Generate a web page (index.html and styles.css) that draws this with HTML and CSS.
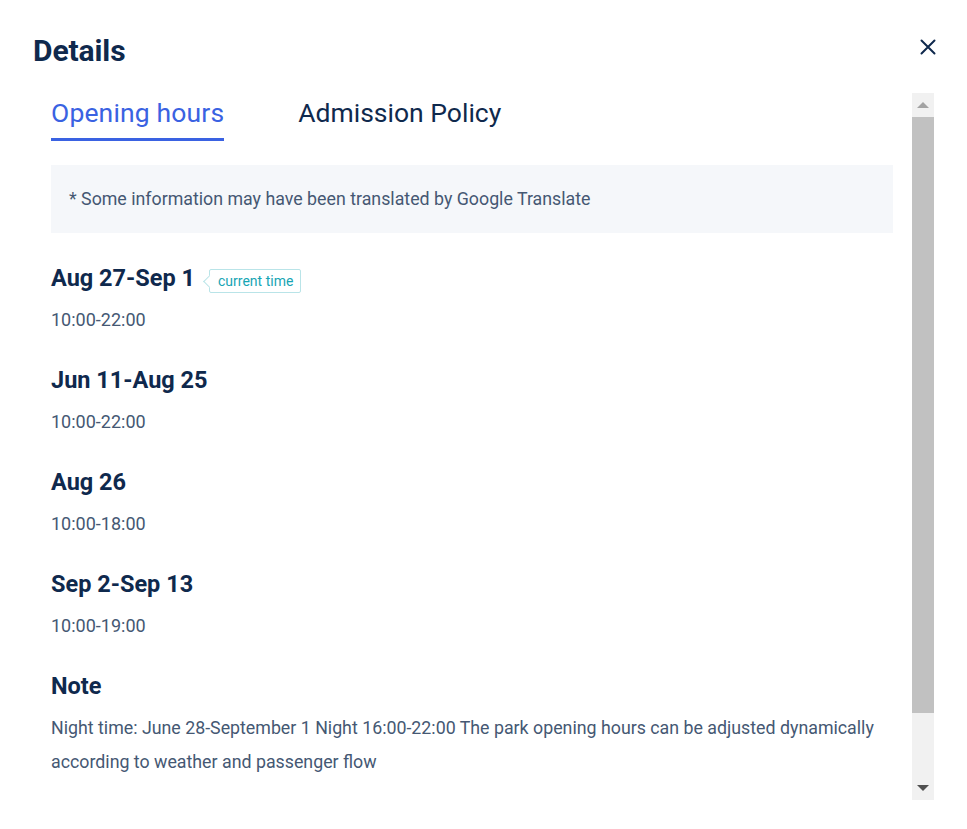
FILE: index.html
```html
<!DOCTYPE html>
<html lang="en">
<head>
  <meta charset="UTF-8">
  <title>Details</title>
  <link rel="stylesheet" href="styles.css">
</head>
<body>

<div class="modal">
  <div class="modal-head">
    <h2>Details</h2>
    <button class="close" aria-label="Close">
      <svg width="16" height="16" viewBox="0 0 16 16"><path d="M1.5 1.5l13 13M14.5 1.5l-13 13" stroke="#0f294d" stroke-width="2" stroke-linecap="round"/></svg>
    </button>
  </div>

  <div class="modal-body">
    <div class="scroll-content">
      <div class="tabs">
        <div class="tab active">Opening hours</div>
        <div class="tab">Admission Policy</div>
      </div>

      <div class="notice">* Some information may have been translated by Google Translate</div>

      <div class="period">
        <h3>Aug 27-Sep 1 <span class="badge">current time</span></h3>
        <p>10:00-22:00</p>
      </div>

      <div class="period">
        <h3>Jun 11-Aug 25</h3>
        <p>10:00-22:00</p>
      </div>

      <div class="period">
        <h3>Aug 26</h3>
        <p>10:00-18:00</p>
      </div>

      <div class="period">
        <h3>Sep 2-Sep 13</h3>
        <p>10:00-19:00</p>
      </div>

      <div class="period note">
        <h3>Note</h3>
        <p>Night time: June 28-September 1 Night 16:00-22:00 The park opening hours can be adjusted dynamically according to weather and passenger flow</p>
      </div>
    </div>

    <div class="scrollbar">
      <div class="sb-btn"><span class="arrow-up"></span></div>
      <div class="sb-track"><div class="sb-thumb"></div></div>
      <div class="sb-btn"><span class="arrow-down"></span></div>
    </div>
  </div>
</div>

</body>
</html>
```

FILE: styles.css
```css
body {
  margin: 0;
  background: #fff;
  font-family: Roboto, "Noto Sans", sans-serif;
  color: #0f294d;
}

.modal {
  width: 967px;
  height: 829px;
  background: #fff;
}

.modal-head {
  display: flex;
  justify-content: space-between;
  align-items: center;
  padding: 32px 28px 0 33px;
  height: 36px;
}

.modal-head h2 {
  margin: 0;
  font-size: 30px;
  font-weight: 700;
  color: #0f294d;
  letter-spacing: -0.1px;
}

.close {
  background: none;
  border: none;
  padding: 0;
  width: 22px;
  height: 22px;
  margin-top: -6px;
  display: flex;
  align-items: center;
  justify-content: center;
  cursor: pointer;
}

.modal-body {
  display: flex;
  margin-top: 25px;
  height: 707px;
}

.scroll-content {
  flex: 1;
  overflow: hidden;
  padding: 0 19px 0 18px;
  margin-left: 33px;
}

.tabs {
  display: flex;
  gap: 74px;
}

.tab {
  font-size: 26.5px;
  color: #0f294d;
  padding: 4px 0 10px;
  border-bottom: 3px solid transparent;
  line-height: 31px;
}

.tab.active {
  color: #3a62e2;
  border-bottom-color: #3a62e2;
  letter-spacing: 0.15px;
}

.notice {
  margin-top: 24px;
  background: #f5f7fa;
  padding: 22px 18px;
  font-size: 17.8px;
  line-height: 24px;
  color: #455873;
}

.period {
  margin-top: 30px;
}

.period + .period {
  margin-top: 32px;
}

.period h3 {
  margin: 0;
  font-size: 23.5px;
  font-weight: 700;
  line-height: 30px;
  color: #0f294d;
  display: flex;
  align-items: center;
}

.period p {
  margin: 14px 0 0;
  font-size: 18px;
  line-height: 26px;
  color: #455873;
}

.note p {
  font-size: 17.8px;
  line-height: 34px;
  margin-top: 10px;
}

.badge {
  position: relative;
  top: 3px;
  margin-left: 14px;
  font-size: 14px;
  font-weight: 400;
  line-height: 22px;
  padding: 0 7px 0 8px;
  color: #17a5b4;
  border: 1px solid #b9e4e8;
  border-radius: 2px;
  background: #fff;
}

.badge::before {
  content: "";
  position: absolute;
  left: -5px;
  top: 7px;
  width: 8px;
  height: 8px;
  background: #fff;
  border-left: 1px solid #b9e4e8;
  border-bottom: 1px solid #b9e4e8;
  transform: rotate(45deg);
}

.scrollbar {
  width: 22px;
  margin-right: 33px;
  display: flex;
  flex-direction: column;
  background: #f1f1f1;
}

.sb-btn {
  height: 24px;
  display: flex;
  align-items: center;
  justify-content: center;
}

.arrow-up {
  width: 0;
  height: 0;
  border-left: 6px solid transparent;
  border-right: 6px solid transparent;
  border-bottom: 6px solid #a3a3a3;
}

.arrow-down {
  width: 0;
  height: 0;
  border-left: 6px solid transparent;
  border-right: 6px solid transparent;
  border-top: 6px solid #505050;
}

.sb-track {
  flex: 1;
}

.sb-thumb {
  height: 596px;
  background: #c1c1c1;
}
```
